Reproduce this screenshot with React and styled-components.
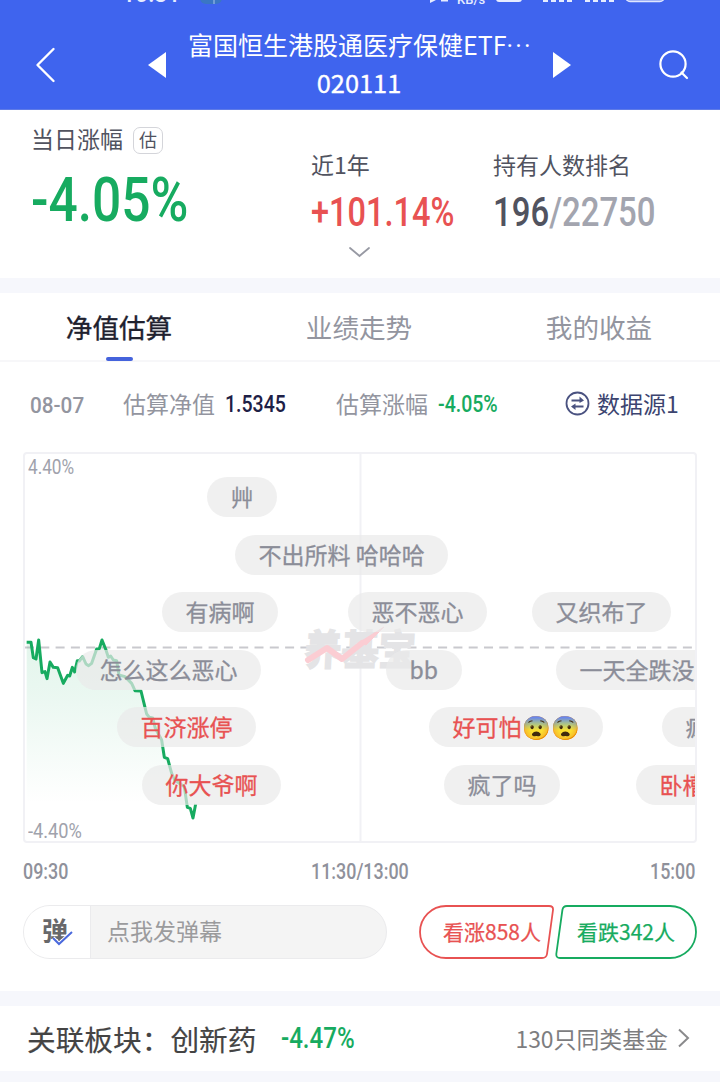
import React from 'react';
import styled, { createGlobalStyle } from 'styled-components';

const GlobalStyle = createGlobalStyle`
    * {
        box-sizing: border-box;
    }

    body {
        margin: 0;
        background: #fff;
        font-family: 'Noto Sans CJK SC', 'Noto Sans', sans-serif;
        color: #51535f;
    }
`;

const Page = styled.div`
    width: 720px;
    height: 1082px;
    overflow: hidden;
    display: flex;
    flex-direction: column;
    background: #fff;
`;

// Narrow figures: the glyphs are squeezed, $w is the room they take in the row
const Num = styled.span`
    display: inline-block;
    flex: none;
    width: ${p => p.$w}px;
    font-family: Roboto, sans-serif;
    font-size: ${p => p.$size}px;
    font-weight: ${p => p.$weight || 500};
    line-height: 1;
    color: ${p => p.$color || 'inherit'};
    white-space: nowrap;
    transform: scaleX(${p => p.$scale || 0.83});
    transform-origin: 0 50%;
`;

const Header = styled.header`
    height: 110px;
    flex: none;
    background: #3f64ee;
    border-bottom: 1px solid #5f7be6;
    color: #fff;
    display: flex;
    flex-direction: column;
`;

const StatusBar = styled.div`
    height: 6px;
    flex: none;
    overflow: hidden;
`;

const NavBar = styled.div`
    height: 103px;
    display: flex;
    align-items: center;
    padding: 15px 31px 0 35px;
`;

const NavIcon = styled.svg`
    flex: none;
    display: block;
    margin-left: ${p => p.$left || 0}px;
`;

const Title = styled.div`
    width: 342px;
    margin-left: 22px;
    margin-right: 1px;
    padding-bottom: 4px;
    text-align: center;
    font-size: 25px;
    line-height: 36px;
    white-space: nowrap;
`;

const TitleDots = styled.span`
    font-family: Roboto, sans-serif;
    letter-spacing: 2.2px;
`;

const FundCode = styled.div`
    font-size: 25.4px;
    line-height: 35px;
    -webkit-text-stroke: 0.35px #fff;
`;

const Summary = styled.section`
    height: 168px;
    flex: none;
    display: flex;
    flex-direction: column;
`;

const Stats = styled.div`
    height: 131px;
    display: flex;
    padding-left: 31px;
`;

const Stat = styled.div`
    width: ${p => p.$w}px;
    padding-top: ${p => p.$top}px;
    display: flex;
    flex-direction: column;
    gap: ${p => p.$gap}px;
`;

const StatLabel = styled.div`
    display: flex;
    align-items: center;
    gap: 10px;
    font-size: 23px;
    line-height: 30px;
    height: 30px;
    white-space: nowrap;
`;

const EstimateTag = styled.span`
    width: 30px;
    height: 27px;
    margin-top: 5px;
    border: 1.5px solid #d4d5da;
    border-radius: 7px;
    font-size: 18px;
    line-height: 23px;
    text-align: center;
`;

const Muted = styled.span`
    color: #a3a5af;
`;

const ExpandIcon = styled.svg`
    display: block;
    margin: 4px auto 0 348px;
`;

const Band = styled.div`
    height: ${p => p.$h}px;
    flex: none;
    background: #f6f7fc;
`;

const Tabs = styled.nav`
    height: 69px;
    flex: none;
    display: grid;
    grid-template-columns: repeat(3, 1fr);
    border-bottom: 2px solid #f7f7f9;
`;

const Tab = styled.div`
    display: flex;
    flex-direction: column;
    align-items: center;
    height: 69px;
    padding: 14px 2px 0 0;
    font-size: 26.6px;
    line-height: 40px;
    color: ${p => (p.$active ? '#20212e' : '#93959f')};
    -webkit-text-stroke: ${p => (p.$active ? '0.35px #20212e' : '0')};

    &::after {
        content: '';
        width: 27px;
        height: 4px;
        margin-top: 10px;
        border-radius: 2px;
        background: ${p => (p.$active ? '#4563dc' : 'transparent')};
    }
`;

const InfoRow = styled.div`
    height: 90px;
    flex: none;
    display: flex;
    align-items: center;
    padding: 0 0 4px 30px;
    font-size: 23px;
    line-height: 30px;
    color: #93959f;
    white-space: nowrap;
`;

const InfoLabel = styled.span`
    margin: 0 10px 4px ${p => p.$left}px;
`;

const Source = styled.div`
    display: flex;
    align-items: center;
    gap: 7px;
    margin: 0 0 4px 67px;
    color: #3c4470;
`;

const Chart = styled.div`
    position: relative;
    width: 674px;
    height: 391px;
    flex: none;
    margin-left: 23px;
    border: 2px solid #f1f1f5;
    border-radius: 4px;
    overflow: hidden;
`;

const ChartLines = styled.svg`
    position: absolute;
    left: -2px;
    top: -1px;
`;

const ScaleLabel = styled.div`
    position: absolute;
    left: 3px;
    ${p => (p.$bottom ? 'bottom: 0;' : 'top: 3px;')}
    display: flex;
    color: #a0a2ac;
`;

const Watermark = styled.div`
    position: absolute;
    left: 280px;
    top: 168px;
    font-size: 37px;
    line-height: 50px;
    font-weight: 700;
    white-space: nowrap;
    color: #e4e4e6;
    -webkit-text-stroke: 1.6px #e4e4e6;
    paint-order: stroke;
    transform: skewX(-3deg) scaleY(1.12);
`;

const WatermarkTrend = styled.svg`
    position: absolute;
    left: 279px;
    top: 171px;
`;

const Bullet = styled.div`
    position: absolute;
    left: ${p => p.$x - 25}px;
    top: ${p => 23 + p.$lane * 57.6}px;
    height: 40px;
    padding: 0 23.6px;
    border-radius: 20px;
    background: rgba(234, 234, 234, 0.7);
    font-size: 23px;
    line-height: 39px;
    white-space: nowrap;
    color: ${p => (p.$hot ? '#e85252' : '#8b8d98')};
    -webkit-text-stroke: 0.3px currentColor;
`;

const TimeAxis = styled.div`
    height: 62px;
    flex: none;
    display: flex;
    justify-content: space-between;
    padding: 18px 24px 0 23px;
    color: #8f919b;
`;

const ActionRow = styled.div`
    height: 86px;
    flex: none;
    display: flex;
    align-items: flex-start;
    padding-left: 23px;
`;

const BulletInput = styled.div`
    width: 364px;
    height: 54px;
    display: flex;
    border: 1px solid #ebebed;
    border-radius: 27px;
    overflow: hidden;
    background: #f4f4f4;
`;

const BulletToggle = styled.div`
    width: 67px;
    flex: none;
    display: flex;
    align-items: center;
    justify-content: center;
    background: #fff;
    border-right: 1px solid #ebebed;
`;

const Placeholder = styled.div`
    padding-left: 16px;
    font-size: 23px;
    line-height: 49px;
    color: #9b9b9d;
`;

const Vote = styled.div`
    display: grid;
    width: ${p => p.$w}px;
    height: 54px;
    margin-left: ${p => p.$left}px;
    color: ${p => p.$color};

    > * {
        grid-area: 1 / 1;
    }
`;

const VoteText = styled.span`
    padding-left: ${p => p.$pad}px;
    font-size: 21px;
    line-height: 52px;
    white-space: nowrap;
    -webkit-text-stroke: 0.25px currentColor;
`;

const SectorRow = styled.div`
    height: 65px;
    flex: none;
    display: flex;
    align-items: center;
    padding: 0 30px 0 27px;
    font-size: 28.7px;
    line-height: 40px;
    color: #444;
    white-space: nowrap;
`;

const SectorName = styled.span`
    margin-right: 24px;
    -webkit-text-stroke: 0.15px #444;
`;

const SameFunds = styled.div`
    display: flex;
    align-items: center;
    gap: 9px;
    margin: 0 0 1px auto;
    font-size: 22.9px;
    color: #7d7d7f;
`;

const GREEN = '#17ab60';
const RED = '#e85252';

const trend =
    '80,127 93,127 100,173 108,177 116,120 126,218 135,215 141,236 150,186 160,202 173,203 190,250 203,226 209,228 217,202 224,216 232,182 238,183 248,170 258,192 266,197 275,190 290,147 298,146 306,120 318,150 325,172 332,168 340,180 350,182 357,225 375,230 395,250 405,272 423,273 435,322 440,342 448,352 458,354 466,385 485,420 493,472 503,476 515,520 524,540 553,560 562,622 571,625 579,654 587,612';

const bullets = [
    { x: 207, lane: 0, text: '艸' },
    { x: 235, lane: 1, text: '不出所料 哈哈哈' },
    { x: 162, lane: 2, text: '有病啊' },
    { x: 348, lane: 2, text: '恶不恶心' },
    { x: 532, lane: 2, text: '又织布了' },
    { x: 76, lane: 3, text: '怎么这么恶心' },
    { x: 386, lane: 3, text: 'bb' },
    { x: 556, lane: 3, text: '一天全跌没了' },
    { x: 117, lane: 4, text: '百济涨停', hot: true },
    { x: 429, lane: 4, text: '好可怕😨😨', hot: true },
    { x: 662, lane: 4, text: '疯了' },
    { x: 142, lane: 5, text: '你大爷啊', hot: true },
    { x: 444, lane: 5, text: '疯了吗' },
    { x: 636, lane: 5, text: '卧槽', hot: true },
];

const StatusIcons = () => (
    <NavIcon width="720" height="6" fill="#e6ecff">
        <text x="122" y="1.5" fontSize="23" fontFamily="Roboto" fontWeight="500">10:31</text>
        <rect x="200" y="-12" width="22" height="16" rx="6" fill="#3a76c4" />
        <path d="M214 0v4" stroke="#a9c4ec" />
        <path d="M430 0l6 0-6 3zM441 0h7v1.5h-7z" />
        <text x="457" y="3.5" fontSize="13" fontFamily="Roboto" fontWeight="500">KB/s</text>
        <rect x="496" y="-12" width="26" height="14" rx="3" />
        <path d="M543 0h5v2h-5zM551 0h5v2h-5zM559 0h5v2h-5zM567 0h5v2h-5zM585 0h5v2h-5zM593 0h5v2h-5zM601 0h5v2h-5zM609 0h5v2h-5z" />
        <rect x="626" y="-14" width="38" height="15.5" rx="4" fill="#8fa5f2" stroke="#dfe6ff" strokeWidth="1.5" />
    </NavIcon>
);

const TrendChart = () => (
    <Chart>
        <ChartLines width="674" height="390">
            <defs>
                <linearGradient id="fall" x1="0" y1="0" x2="0" y2="1">
                    <stop offset="0" stopColor="#17ab60" stopOpacity="0.12" />
                    <stop offset="0.3" stopColor="#17ab60" stopOpacity="0.09" />
                    <stop offset="0.92" stopColor="#17ab60" stopOpacity="0" />
                </linearGradient>
            </defs>
            <path d="M337.5 0V390" stroke="#f1f1f5" strokeWidth="2" />
            <path d="M2 194.5H672" stroke="#c9c9ce" strokeWidth="2" strokeDasharray="9 6.3" />
            <g transform="translate(-23 147) scale(0.33333)">
                <polygon points={`80,654 ${trend} 587,654`} fill="url(#fall)" />
                <polyline points={trend} fill="none" stroke={GREEN} strokeWidth="9" strokeLinejoin="round" />
            </g>
        </ChartLines>
        <ScaleLabel><Num $size={20} $w={46} $scale={0.86} $weight={400}>4.40%</Num></ScaleLabel>
        <ScaleLabel $bottom><Num $size={20} $w={54} $weight={400} $scale={0.91}>-4.40%</Num></ScaleLabel>
        <Watermark>养基宝</Watermark>
        <WatermarkTrend width="90" height="50" fill="none" stroke="#fbcdd3">
            <path d="M4 35L23 23L38 34L58 18" strokeWidth="6" strokeLinecap="round" strokeLinejoin="round" />
            <path d="M56 17L80 2L62 20z" fill="#fbcdd3" strokeWidth="1" />
        </WatermarkTrend>
        {bullets.map(b => (
            <Bullet key={b.text} $x={b.x} $lane={b.lane} $hot={b.hot}>{b.text}</Bullet>
        ))}
    </Chart>
);

const App = () => {
    return (
        <Page>
            <GlobalStyle />
            <Header>
                <StatusBar><StatusIcons /></StatusBar>
                <NavBar>
                    <NavIcon width="22" height="36" fill="none" stroke="#fff" strokeWidth="2.4" strokeLinecap="round" strokeLinejoin="round">
                        <path d="M18.5 2L2.5 18L18.5 34" />
                    </NavIcon>
                    <NavIcon $left={91} width="18" height="26" fill="#fff"><path d="M18 0V26L0 13z" /></NavIcon>
                    <Title>
                        富国恒生港股通医疗保健ETF<TitleDots>···</TitleDots>
                        <FundCode>020111</FundCode>
                    </Title>
                    <NavIcon $left={22} width="18" height="26" fill="#fff"><path d="M0 0V26L18 13z" /></NavIcon>
                    <NavIcon $left={87} width="32" height="32" fill="none" stroke="#fff" strokeWidth="2.2" strokeLinecap="round">
                        <circle cx="15" cy="15" r="12.6" />
                        <path d="M23.5 23.5L29 29" />
                    </NavIcon>
                </NavBar>
            </Header>

            <Summary>
                <Stats>
                    <Stat $w={280} $top={13} $gap={16}>
                        <StatLabel>当日涨幅<EstimateTag>估</EstimateTag></StatLabel>
                        <Num $size={62} $w={158} $color={GREEN}>-4.05%</Num>
                    </Stat>
                    <Stat $w={182} $top={39} $gap={14}>
                        <StatLabel>近1年</StatLabel>
                        <Num $size={40.4} $w={144} $scale={0.805} $color={RED}>+101.14%</Num>
                    </Stat>
                    <Stat $w={200} $top={39} $gap={14}>
                        <StatLabel>持有人数排名</StatLabel>
                        <Num $size={40.4} $w={160} $scale={0.815}>196<Muted>/22750</Muted></Num>
                    </Stat>
                </Stats>
                <ExpandIcon width="24" height="14" fill="none" stroke="#9799a3" strokeWidth="1.8" strokeLinecap="round">
                    <path d="M2 3L11.5 11L21 3" />
                </ExpandIcon>
            </Summary>
            <Band $h={15} />

            <Tabs>
                <Tab $active>净值估算</Tab>
                <Tab>业绩走势</Tab>
                <Tab>我的收益</Tab>
            </Tabs>

            <InfoRow>
                <Num $size={22.3} $w={54} $scale={0.93}>08-07</Num>
                <InfoLabel $left={39}>估算净值</InfoLabel>
                <Num $size={23.5} $w={61} $color="#1d2046">1.5345</Num>
                <InfoLabel $left={50}>估算涨幅</InfoLabel>
                <Num $size={23.5} $w={60} $color={GREEN}>-4.05%</Num>
                <Source>
                    <svg width="25" height="25" fill="none" stroke="#4a5280" strokeWidth="1.8">
                        <circle cx="12.5" cy="12.5" r="11" />
                        <path d="M6.5 9.5H16M8.5 15.5H18.5" />
                        <path d="M14.5 5.5L19 9.5L14.5 12zM10.5 12.5L6 15.5L10.5 19z" fill="#4a5280" stroke="none" />
                    </svg>
                    数据源1
                </Source>
            </InfoRow>

            <TrendChart />
            <TimeAxis>
                <Num $size={21.3} $w={46} $scale={0.84}>09:30</Num>
                <Num $size={21.3} $w={98} $scale={0.84}>11:30/13:00</Num>
                <Num $size={21.3} $w={46} $scale={0.84}>15:00</Num>
            </TimeAxis>

            <ActionRow>
                <BulletInput>
                    <BulletToggle>
                        <svg width="34" height="32">
                            <text x="2" y="25" fontSize="26" fontWeight="700" fill="#68686a">弹</text>
                            <path d="M13 22L19 28L32 16" fill="none" stroke="#fff" strokeWidth="4" />
                            <path d="M13 22L19 28L32 16" fill="none" stroke="#4a69dd" strokeWidth="2" />
                        </svg>
                    </BulletToggle>
                    <Placeholder>点我发弹幕</Placeholder>
                </BulletInput>
                <Vote $w={135} $left={32} $color={RED}>
                    <svg width="135" height="54" fill="none" stroke="currentColor" strokeWidth="1.8">
                        <path d="M27 1H130Q134.5 1 134 5L128 49Q127.4 53 123 53H27A26 26 0 0 1 27 1z" />
                    </svg>
                    <VoteText $pad={24}>看涨858人</VoteText>
                </Vote>
                <Vote $w={142} $left={1} $color={GREEN}>
                    <svg width="142" height="54" fill="none" stroke="currentColor" strokeWidth="1.8">
                        <path d="M115 1H12Q8 1 7.4 5L1.3 49Q1 53 5 53H115A26 26 0 0 0 115 1z" />
                    </svg>
                    <VoteText $pad={22}>看跌342人</VoteText>
                </Vote>
            </ActionRow>
            <Band $h={15} />

            <SectorRow>
                <SectorName>关联板块：创新药</SectorName>
                <Num $size={29} $w={74} $color={GREEN}>-4.47%</Num>
                <SameFunds>
                    130只同类基金
                    <svg width="13" height="20" fill="none" stroke="#8a8a8c" strokeWidth="2">
                        <path d="M2 1.5L11 10L2 18.5" />
                    </svg>
                </SameFunds>
            </SectorRow>
            <Band $h={11} />
        </Page>
    );
};

export default App;
